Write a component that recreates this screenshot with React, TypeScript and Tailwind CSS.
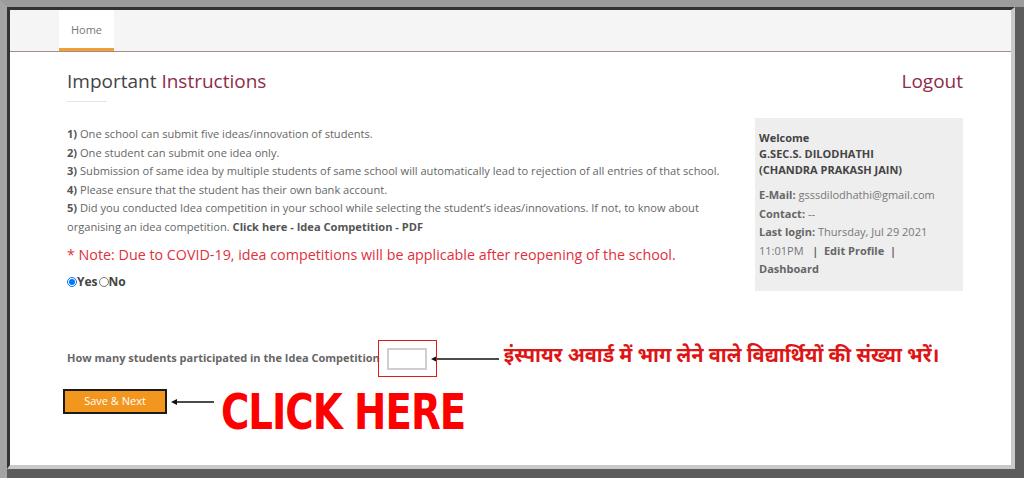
const arrowLeft = (w: number) => (
  <svg width={w} height="10" viewBox={`0 0 ${w} 10`} className="shrink-0">
    <line x1="3" y1="5" x2={w} y2="5" stroke="#111" strokeWidth="1.6" />
    <path d="M0 5 L6 2 L6 8 Z" fill="#111" />
  </svg>
);

function Instructions() {
  return (
    <div className="w-[664px] pt-[7px] text-[11.1px] leading-[18.6px] text-[#666]">
      <p><b className="text-[#555]">1)</b> One school can submit five ideas/innovation of students.</p>
      <p><b className="text-[#555]">2)</b> One student can submit one idea only.</p>
      <p><b className="text-[#555]">3)</b> Submission of same idea by multiple students of same school will automatically lead to rejection of all entries of that school.</p>
      <p><b className="text-[#555]">4)</b> Please ensure that the student has their own bank account.</p>
      <p>
        <b className="text-[#555]">5)</b> Did you conducted Idea competition in your school while selecting the student’s ideas/innovations. If not, to know about organising an idea competition. <b className="text-[#555]">Click here - Idea Competition - PDF</b>
      </p>
      <p className="mt-[7px] text-[14.3px] leading-[22px] text-[#e0303c]">
        * Note: Due to COVID-19, idea competitions will be applicable after reopening of the school.
      </p>
      <div className="mt-[7px] flex items-center text-[12px] font-bold text-[#444]">
        <input type="radio" name="idea" defaultChecked className="m-0 h-[10px] w-[10px]" />
        <span className="mr-px">Yes</span>
        <input type="radio" name="idea" className="m-0 h-[10px] w-[10px]" />
        <span>No</span>
      </div>
    </div>
  );
}

function WelcomeBox() {
  return (
    <div className="w-[208px] bg-[#eeeeee] px-[4px] pt-[12px] pb-[5px] text-[11px] text-[#777]">
      <div className="font-bold leading-[16px] text-[#444]">
        <p>Welcome</p>
        <p>G.SEC.S. DILODHATHI</p>
        <p>(CHANDRA PRAKASH JAIN)</p>
      </div>
      <div className="mt-[8px] leading-[18.5px]">
        <p><b className="text-[#666]">E-Mail:</b> gsssdilodhathi@gmail.com</p>
        <p><b className="text-[#666]">Contact:</b> --</p>
        <p><b className="text-[#666]">Last login:</b> Thursday, Jul 29 2021</p>
        <p>
          11:01PM&nbsp;&nbsp;&nbsp;<b className="text-[#666]">|&nbsp;&nbsp;Edit Profile&nbsp;&nbsp;|</b>
        </p>
        <p><b className="text-[#666]">Dashboard</b></p>
      </div>
    </div>
  );
}

export default function App() {
  return (
    <div
      className="h-[478px] w-[1024px] overflow-hidden border-l-[7px] border-t-[7px] border-l-[#a4a4a4] border-t-[#9c9c9c] bg-[#5c5c5c] pr-[9px] pb-[9px]"
      style={{ fontFamily: '"Open Sans", "Liberation Sans", sans-serif' }}
    >
      <div className="h-full border-l-[3px] border-t-[3px] border-r-[4px] border-b-[4px] border-l-[#333] border-t-[#333] border-r-[#c9c9c9] border-b-[#c9c9c9] bg-white">
        <nav className="flex h-[42px] border-b border-[#a88a90] bg-[#f5f5f5] pl-[49px]">
          <div className="flex w-[55px] items-center justify-center border-b-[3px] border-[#f0a032] bg-white pt-[2px] text-[11px] text-[#777]">
            Home
          </div>
        </nav>

        <div className="pl-[57px] pr-[48px]">
          <div className="mt-[16px] flex items-start justify-between">
            <div>
              <h1 className="text-[19px] leading-[26px] text-[#444]">
                Important <span className="text-[#8e2c48]">Instructions</span>
              </h1>
              <div className="mt-[7px] w-[40px] border-t border-[#e4e4e4]" />
            </div>
            <span className="text-[19px] leading-[26px] text-[#8e2c48]">Logout</span>
          </div>

          <div className="mt-[16px] flex justify-between">
            <Instructions />
            <WelcomeBox />
          </div>

          <div className="mt-[49px] flex h-[37px] items-center">
            <span className="text-[11px] font-bold text-[#666]">How many students participated in the Idea Competition</span>
            <div className="relative -ml-[2px] flex h-[37px] w-[59px] items-center justify-center border-[1.5px] border-[#e01a1a]">
              <input type="text" className="h-[22px] w-[40px] border-2 border-[#cfcfcf] bg-white outline-none" />
            </div>
            <div className="ml-[-6px]">{arrowLeft(68)}</div>
            <span
              className="ml-[5px] -mt-[4px] whitespace-nowrap text-[20px] font-bold text-[#dd1515]"
              style={{ fontFamily: '"Noto Sans Devanagari", "Lohit Devanagari", "Noto Sans", sans-serif' }}
            >
              इंस्पायर अवार्ड में भाग लेने वाले विद्यार्थियों की संख्या भरें।
            </span>
          </div>

          <div className="-ml-[4px] mt-[12px] flex h-[25px] items-center">
            <button className="h-[25px] w-[104px] border-2 border-[#1a1a1a] bg-[#f2961e] text-[11px] text-white">
              Save &amp; Next
            </button>
            <div className="ml-[4px]">{arrowLeft(43)}</div>
            <span
              className="ml-[7px] mt-[12px] inline-block origin-top-left scale-x-[1.05] scale-y-[1.22] text-[41px] font-bold leading-[40px] tracking-[-1px] text-[#ff0000]"
              style={{ fontFamily: '"DejaVu Sans Condensed", "Liberation Sans Narrow", "Liberation Sans", sans-serif' }}
            >
              CLICK HERE
            </span>
          </div>
        </div>
      </div>
    </div>
  );
}
